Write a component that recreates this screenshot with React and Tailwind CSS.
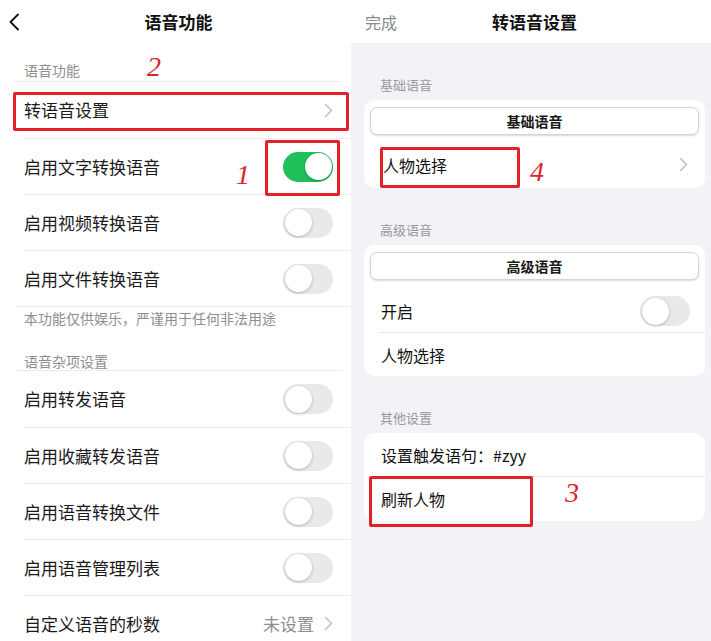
import React from "react";

const font = { fontFamily: '"Noto Sans CJK SC", "Noto Sans", sans-serif' };

function Chevron({ className = "" }) {
  return (
    <svg width="9" height="15" viewBox="0 0 9 15" className={className}>
      <polyline points="1.5,1.5 7.5,7.5 1.5,13.5" fill="none" stroke="#c2c2c6" strokeWidth="1.6" strokeLinecap="round" strokeLinejoin="round" />
    </svg>
  );
}

function Toggle({ on = false }) {
  return (
    <div className={`relative shrink-0 w-[50px] h-[30px] rounded-full ${on ? "bg-[#1fbf5a]" : "bg-[#e9e9eb]"}`}>
      <div className={`absolute top-[1.5px] ${on ? "right-[1.5px]" : "left-[1.5px]"} w-[27px] h-[27px] rounded-full bg-white shadow-[0_1px_3px_rgba(0,0,0,0.25)]`} />
    </div>
  );
}

function LeftRow({ label, right, border = true }) {
  return (
    <div className={`ml-[24px] h-[56px] flex items-center justify-between pr-[18px] ${border ? "border-t border-[#ececec]" : ""}`}>
      <span className="text-[17px] text-[#1a1a1a]">{label}</span>
      {right}
    </div>
  );
}

function Num({ children, className }) {
  return (
    <span className={`absolute text-[28px] leading-none italic text-[#d8262c] ${className}`} style={{ fontFamily: '"Liberation Serif", serif' }}>
      {children}
    </span>
  );
}

function Box({ className }) {
  return <div className={`absolute border-[3px] border-[#e3212a] rounded-[2px] pointer-events-none ${className}`} />;
}

function RightLabel({ children }) {
  return (
    <div className="h-[57px] flex items-end pb-[6px] pl-[29px] text-[13px] leading-[18px] text-[#9a9a9e]">{children}</div>
  );
}

function PillButton({ children }) {
  return (
    <div className="mx-[6px] mt-[7px] h-[28px] rounded-[7px] border border-[#d4d4d6] bg-white shadow-[0_1px_2px_rgba(0,0,0,0.15)] flex items-center justify-center text-[14px] font-bold text-[#1a1a1a]">
      {children}
    </div>
  );
}

export default function App() {
  return (
    <div className="relative w-[711px] h-[641px] overflow-hidden flex bg-white" style={font}>
      {/* Left panel */}
      <div className="w-[351px] shrink-0 bg-white">
        <div className="relative h-[43px] flex items-center justify-center">
          <svg width="12" height="18" viewBox="0 0 12 18" className="absolute left-[8px] top-[13px]">
            <polyline points="10,1.5 2.5,9 10,16.5" fill="none" stroke="#111" strokeWidth="1.8" strokeLinecap="round" strokeLinejoin="round" />
          </svg>
          <span className="text-[17px] font-bold text-[#111] pl-[6px]">语音功能</span>
        </div>
        <div className="h-[38px] flex items-end pb-[2px] pl-[24px] text-[14px] leading-[18px] text-[#8e8e8e]">语音功能</div>
        <div className="mx-[16px] mr-[9px] border-t border-[#ececec]" />
        <LeftRow label="转语音设置" border={false} right={<Chevron />} />
        <LeftRow label="启用文字转换语音" right={<Toggle on />} />
        <LeftRow label="启用视频转换语音" right={<Toggle />} />
        <LeftRow label="启用文件转换语音" right={<Toggle />} />
        <div className="ml-[16px] border-t border-[#ececec]" />
        <div className="pl-[24px] pt-[1px] text-[14px] leading-[20px] text-[#8e8e8e]">本功能仅供娱乐，严谨用于任何非法用途</div>
        <div className="h-[42px] flex items-end pb-0 pl-[24px] text-[14px] leading-[18px] text-[#8e8e8e]">语音杂项设置</div>
        <div className="mx-[16px] mr-[9px] border-t border-[#ececec]" />
        <LeftRow label="启用转发语音" border={false} right={<Toggle />} />
        <LeftRow label="启用收藏转发语音" right={<Toggle />} />
        <LeftRow label="启用语音转换文件" right={<Toggle />} />
        <LeftRow label="启用语音管理列表" right={<Toggle />} />
        <LeftRow
          label="自定义语音的秒数"
          right={
            <div className="flex items-center gap-[10px]">
              <span className="text-[17px] text-[#8e8e8e]">未设置</span>
              <Chevron />
            </div>
          }
        />
      </div>

      {/* Right panel */}
      <div className="flex-1 bg-[#f2f2f7]">
        <div className="relative h-[43px] bg-white flex items-center justify-center">
          <span className="absolute left-[14px] text-[16px] text-[#8a8a8e]">完成</span>
          <span className="text-[17px] font-bold text-[#111] pl-[7px]">转语音设置</span>
        </div>
        <RightLabel>基础语音</RightLabel>
        <div className="ml-[13px] mr-[6px] bg-white rounded-[10px] overflow-hidden">
          <PillButton>基础语音</PillButton>
          <div className="h-[53px] flex items-center justify-between pl-[19px] pr-[17px] pt-[6px]">
            <span className="text-[16px] text-[#111]">人物选择</span>
            <Chevron />
          </div>
        </div>
        <RightLabel>高级语音</RightLabel>
        <div className="ml-[13px] mr-[6px] bg-white rounded-[10px] overflow-hidden">
          <PillButton>高级语音</PillButton>
          <div className="h-[52px] flex items-center justify-between pl-[17px] pr-[15px] pt-[10px]">
            <span className="text-[16px] text-[#111]">开启</span>
            <Toggle />
          </div>
          <div className="ml-[16px] border-t border-[#e6e6e8]" />
          <div className="h-[43px] flex items-center pl-[17px]">
            <span className="text-[16px] text-[#111]">人物选择</span>
          </div>
        </div>
        <RightLabel>其他设置</RightLabel>
        <div className="ml-[13px] mr-[6px] bg-white rounded-[10px] overflow-hidden">
          <div className="h-[43px] flex items-center pl-[17px]">
            <span className="text-[16px] text-[#111]">设置触发语句：#zyy</span>
          </div>
          <div className="ml-[10px] border-t border-[#e6e6e8]" />
          <div className="h-[44px] flex items-center pl-[17px]">
            <span className="text-[16px] text-[#111]">刷新人物</span>
          </div>
        </div>
      </div>

      {/* Annotations */}
      <Box className="left-[13px] top-[92px] w-[336px] h-[39px]" />
      <Box className="left-[265px] top-[140px] w-[75px] h-[56px]" />
      <Box className="left-[380px] top-[147px] w-[140px] h-[41px]" />
      <Box className="left-[369px] top-[476px] w-[164px] h-[51px]" />
      <Num className="left-[147px] top-[53px]">2</Num>
      <Num className="left-[236px] top-[161px]">1</Num>
      <Num className="left-[530px] top-[158px]">4</Num>
      <Num className="left-[565px] top-[479px]">3</Num>
    </div>
  );
}
